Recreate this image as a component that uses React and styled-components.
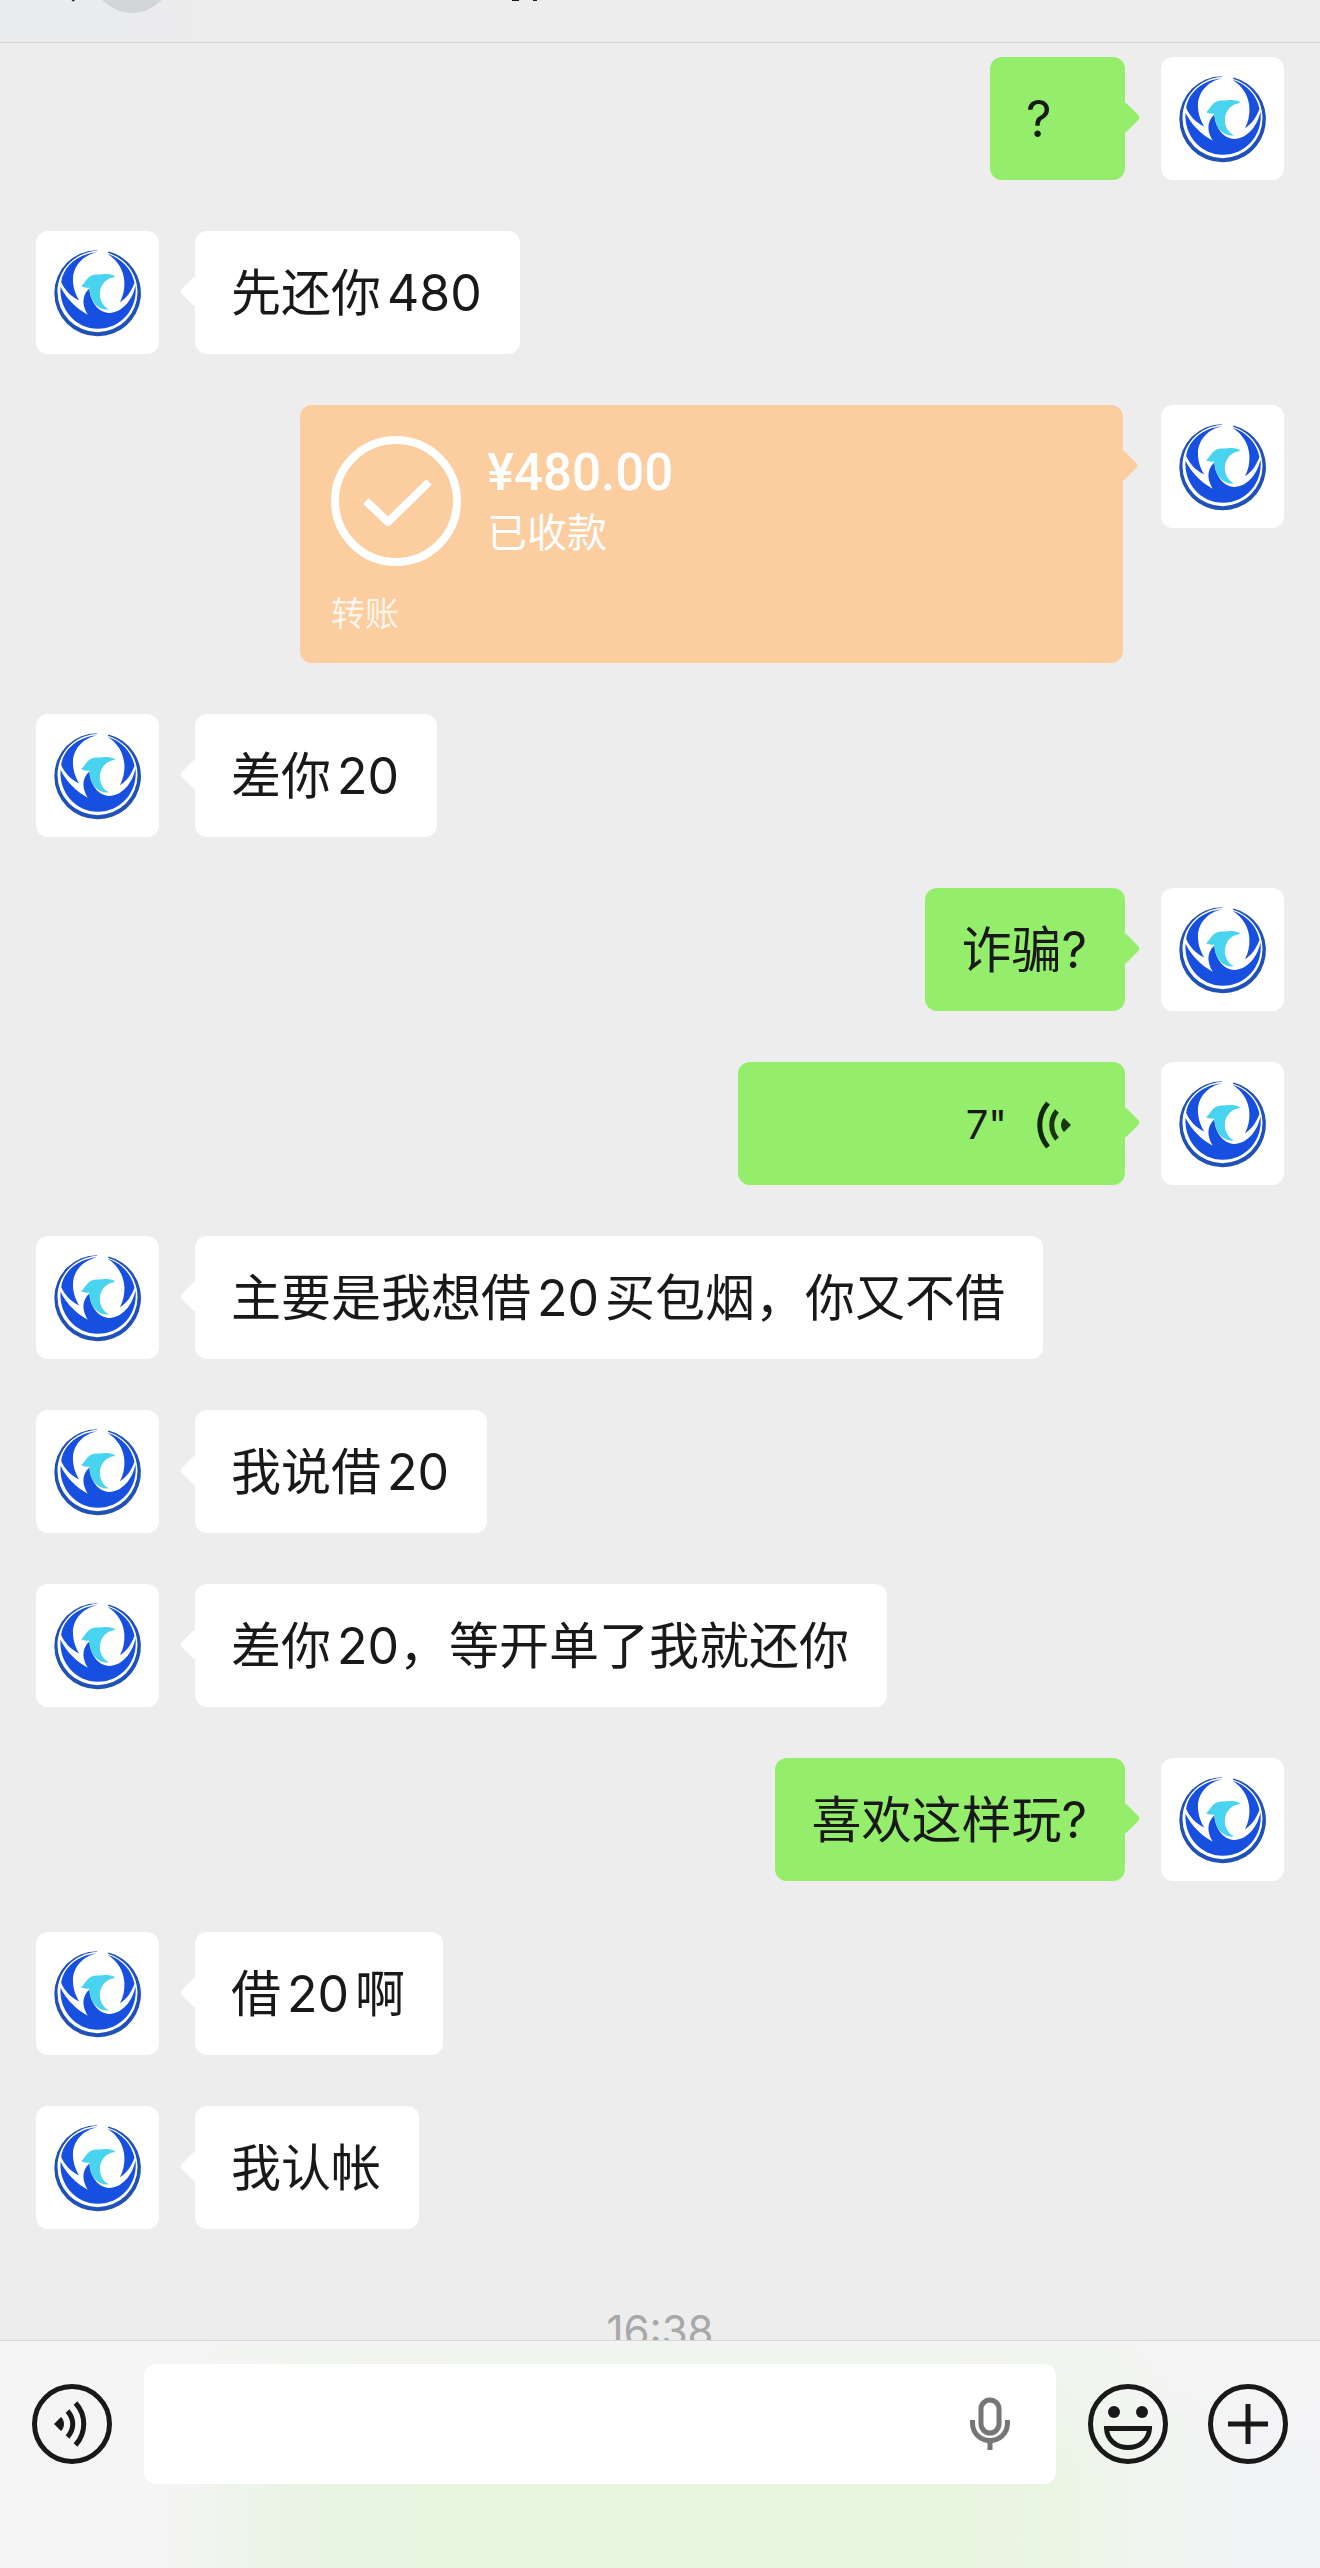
import React from 'react';
import styled, { createGlobalStyle } from 'styled-components';

const GlobalStyle = createGlobalStyle`
  * {
    box-sizing: border-box;
  }

  body {
    margin: 0;
    background: #ededed;
    color: #191919;
    font-family: Inter, 'Noto Sans CJK SC', sans-serif;
  }

  button {
    display: block;
    padding: 0;
    border: 0;
    background: none;
    color: inherit;
    font: inherit;
    cursor: pointer;
  }

  svg {
    display: block;
  }
`;

const Page = styled.div`
  display: flex;
  flex-direction: column;
  height: 100vh;
`;

const Header = styled.header`
  flex: none;
  height: 43px;
  overflow: hidden;
  border-bottom: 1px solid #d5d5d6;
  background: linear-gradient(to right, #eaebee 0, #eaebed 8%, #ededed 20%);
`;

/* the bar is pushed up so only its lower edge stays in view */
const HeaderBar = styled.div`
  display: flex;
  height: 80px;
  margin-top: -67px;
  padding-left: 12px;
`;

const Unread = styled.span`
  width: 80px;
  height: 80px;
  border-radius: 50%;
  background: #d3d4d5;
`;

const TitleEdge = styled.svg`
  margin-left: 340px;
`;

const Messages = styled.main`
  flex: 1;
  min-height: 0;
  overflow-y: auto;
  scrollbar-width: none;
  display: flex;
  flex-direction: column;
  gap: 51px;
  padding: 14px 36px 0;
`;

const Row = styled.div`
  flex: none;
  display: flex;
  flex-direction: ${props => (props.$mine ? 'row-reverse' : 'row')};
  align-items: flex-start;
  gap: 36px;
`;

const Avatar = styled.div`
  flex: none;
  width: 123px;
  height: 123px;
  border-radius: 12px;
  background: #fff;
  overflow: hidden;
`;

const Bubble = styled.div`
  position: relative;
  min-width: 135px;
  padding: 37px 38px 35px 36px;
  border-radius: 12px;
  background: ${props => props.$color};
  font-size: 50px;
  line-height: 51px;

  &::after {
    content: '';
    position: absolute;
    top: 49px;
    ${props => (props.$mine ? 'right' : 'left')}: -11px;
    width: 23px;
    height: 23px;
    border-radius: 4px;
    background: inherit;
    transform: rotate(45deg);
  }
`;

const Latin = styled.span`
  margin-left: 6px;
  margin-right: ${props => (props.$tight ? 0 : '6px')};
`;

const Voice = styled(Bubble)`
  display: flex;
  align-items: center;
  justify-content: flex-end;
  gap: 30px;
  width: 387px;
  padding-right: 54px;
  font-size: 40px;
`;

const Transfer = styled(Bubble)`
  flex: 0 1 823px;
  margin-right: 2px;
  padding: 31px 31px 25px;
  color: #fff;
`;

const TransferMain = styled.div`
  display: flex;
  align-items: center;
  gap: 26px;
`;

const TransferText = styled.div`
  padding-top: 4px;
`;

const Amount = styled.div`
  font-family: Roboto, sans-serif;
  font-size: 51px;
  font-weight: 500;
  line-height: 60px;
`;

const Status = styled.div`
  font-size: 40px;
  line-height: 60px;
`;

const TransferLabel = styled.div`
  margin-top: 24px;
  font-size: 34px;
  line-height: 48px;
  opacity: 0.8;
`;

const Time = styled.time`
  flex: none;
  text-align: center;
  font-size: 42px;
  line-height: 102px;
  color: #a8a8a8;
`;

const Composer = styled.form`
  flex: none;
  display: flex;
  align-items: center;
  gap: 32px;
  padding: 23px 32px 84px;
  border-top: 1px solid #d6d7d6;
  background:
    linear-gradient(to bottom, rgba(245, 245, 245, 0.75) 0, rgba(245, 245, 245, 0) 60%),
    linear-gradient(
      to right,
      #f5f5f5 11%,
      #f1f4ef 16%,
      #ebf4e7 20%,
      #e8f4e2 26%,
      #e8f5e0 34%,
      #e8f5e0 72%,
      #eaf5e4 80%,
      #f1f5f0 87%,
      #f3f4f6 95%
    );
`;

const Field = styled.div`
  flex: 1;
  min-width: 0;
  display: flex;
  align-items: center;
  height: 120px;
  padding-right: 45px;
  border-radius: 12px;
  background: #fff;
`;

const TextInput = styled.input`
  flex: 1;
  min-width: 0;
  height: 100%;
  padding: 0 36px;
  border: 0;
  outline: 0;
  background: transparent;
  font: inherit;
  font-size: 50px;
`;

const Tools = styled.div`
  display: flex;
  gap: 40px;
`;

const Logo = () => (
  <svg width="123" height="123" viewBox="0 -2 366 366" aria-hidden="true">
    <path
      fill="#1f51b8"
      d="M182 55 A128 128 0 0 0 183 311 A128 128 0 0 0 216 59 L214 63 C268 80 302 126 302 180 A119 119 0 0 1 64 180 C64 116 112 62 182 57 Z"
    />
    <path
      fill="#174fe0"
      d="M182 61 C138 70 110 104 110 142 C110 166 118 188 129 205 C104 194 84 172 75 150 C80 106 122 66 182 61 Z"
    />
    <path
      fill="#174fe0"
      d="M213 66 C256 80 285 112 293 152 C284 178 270 197 250 210 C260 190 264 170 263 148 C260 114 244 86 213 66 Z"
    />
    <path
      fill="#174fe0"
      d="M73 164 C92 202 122 230 154 247 C140 224 132 194 159 168 C160 204 184 240 218 242 C256 240 286 206 296 160 C304 230 252 289 184 289 C118 289 68 232 73 164 Z"
    />
    <path
      fill="#48d4ee"
      d="M134 162 C144 155 150 138 164 131 C176 126 186 129 198 127 C214 125 230 127 236 135 C212 136 190 156 190 186 C190 206 202 224 217 231 C192 236 164 214 161 182 C160 176 158 170 157 166 C150 168 142 167 134 162 Z"
    />
  </svg>
);

const VoiceWaves = () => (
  <svg width="34" height="48" viewBox="0 0 34 48" aria-hidden="true">
    <path fill="none" stroke="#0f2608" strokeWidth="5" d="M11 2 C0 15 0 33 11 46" />
    <path fill="none" stroke="#1a350f" strokeWidth="5" d="M20 10 C13 18 13 30 20 38" />
    <path fill="#1a350f" d="M27 17 L34 24 L27 31 C23 27 23 21 27 17 Z" />
  </svg>
);

const CheckCircle = () => (
  <svg width="130" height="130" viewBox="0 0 130 130" fill="none" stroke="#fff" aria-hidden="true">
    <circle cx="65" cy="65" r="61" strokeWidth="8" />
    <path strokeWidth="8" strokeLinejoin="round" d="M35 65 L57 86 L98 46" />
  </svg>
);

const SpeakIcon = () => (
  <svg width="80" height="80" viewBox="0 0 80 80" fill="none" stroke="#191919" strokeWidth="5" aria-hidden="true">
    <circle cx="40" cy="40" r="37.5" />
    <path d="M43.5 19 C54.5 31 54.5 49 43.5 61" />
    <path d="M35.5 27 C42.5 35 42.5 45 35.5 53" />
    <path fill="#191919" stroke="none" d="M22 40 L29 33 C33 37 33 43 29 47 Z" />
  </svg>
);

const SmileIcon = () => (
  <svg width="80" height="80" viewBox="0 0 80 80" fill="none" stroke="#191919" strokeWidth="5" aria-hidden="true">
    <circle cx="40" cy="40" r="37.5" />
    <circle cx="26" cy="28" r="6" fill="#191919" stroke="none" />
    <circle cx="54" cy="28" r="6" fill="#191919" stroke="none" />
    <path d="M18.5 44.5 H61.5 C61 56 51.5 63.5 40 63.5 S19 56 18.5 44.5 Z" />
  </svg>
);

const PlusIcon = () => (
  <svg width="80" height="80" viewBox="0 0 80 80" fill="none" stroke="#191919" strokeWidth="5" aria-hidden="true">
    <circle cx="40" cy="40" r="37.5" />
    <path d="M40 20 V60 M20 40 H60" />
  </svg>
);

const MicIcon = () => (
  <svg width="42" height="54" viewBox="0 0 42 54" fill="none" stroke="#767676" strokeWidth="5" aria-hidden="true">
    <rect x="12" y="3" width="18" height="33" rx="9" />
    <path d="M3.5 23 V26 C3.5 36 11 43.5 21 43.5 S38.5 36 38.5 26 V23" />
    <path d="M21 43 V53" />
  </svg>
);

const messages = [
  { mine: true, text: '?' },
  { text: '先还你480' },
  { mine: true, type: 'transfer', amount: '¥480.00', status: '已收款', label: '转账' },
  { text: '差你20' },
  { mine: true, text: '诈骗?' },
  { mine: true, type: 'voice', text: '7"' },
  { text: '主要是我想借20买包烟，你又不借' },
  { text: '我说借20' },
  { text: '差你20，等开单了我就还你' },
  { mine: true, text: '喜欢这样玩?' },
  { text: '借20啊' },
  { text: '我认帐' }
];

// digits get a little air next to Chinese characters, but not before a comma
const spaced = text =>
  text.split(/(\d+)/).filter(Boolean).map((part, i, parts) => {
    if (!/\d/.test(part)) {
      return <span key={i}>{part}</span>;
    }
    const next = parts[i + 1];
    return (
      <Latin key={i} $tight={!next || next.startsWith('，')}>
        {part}
      </Latin>
    );
  });

const Message = ({ mine, type, text, amount, status, label }) => {
  const color = mine ? '#95ee6b' : '#fff';
  let body = (
    <Bubble $mine={mine} $color={color}>
      {spaced(text || '')}
    </Bubble>
  );
  if (type === 'voice') {
    body = (
      <Voice $mine={mine} $color={color}>
        {text}
        <VoiceWaves />
      </Voice>
    );
  }
  if (type === 'transfer') {
    body = (
      <Transfer $mine={mine} $color="#fbcd9f">
        <TransferMain>
          <CheckCircle />
          <TransferText>
            <Amount>{amount}</Amount>
            <Status>{status}</Status>
          </TransferText>
        </TransferMain>
        <TransferLabel>{label}</TransferLabel>
      </Transfer>
    );
  }
  return (
    <Row $mine={mine}>
      <Avatar>
        <Logo />
      </Avatar>
      {body}
    </Row>
  );
};

const App = () => (
  <Page lang="zh-CN">
    <GlobalStyle />
    <Header>
      <HeaderBar>
        <button type="button" aria-label="返回">
          <svg width="80" height="80" viewBox="0 0 80 80" fill="none" stroke="#191919" strokeWidth="5">
            <path d="M63 67 L34 38 L63 9" />
          </svg>
        </button>
        <Unread />
        <TitleEdge width="28" height="80" viewBox="0 0 28 80" fill="#191919" aria-hidden="true">
          <path d="M0 60 H7 V68 H0 Z M21 60 H25 V68 H21 Z" />
        </TitleEdge>
      </HeaderBar>
    </Header>
    <Messages>
      {messages.map((message, i) => (
        <Message key={i} {...message} />
      ))}
      <Time>16:38</Time>
    </Messages>
    <Composer onSubmit={e => e.preventDefault()}>
      <button type="button" aria-label="语音">
        <SpeakIcon />
      </button>
      <Field>
        <TextInput type="text" aria-label="消息" />
        <button type="button" aria-label="语音输入">
          <MicIcon />
        </button>
      </Field>
      <Tools>
        <button type="button" aria-label="表情">
          <SmileIcon />
        </button>
        <button type="button" aria-label="更多">
          <PlusIcon />
        </button>
      </Tools>
    </Composer>
  </Page>
);

export default App;
